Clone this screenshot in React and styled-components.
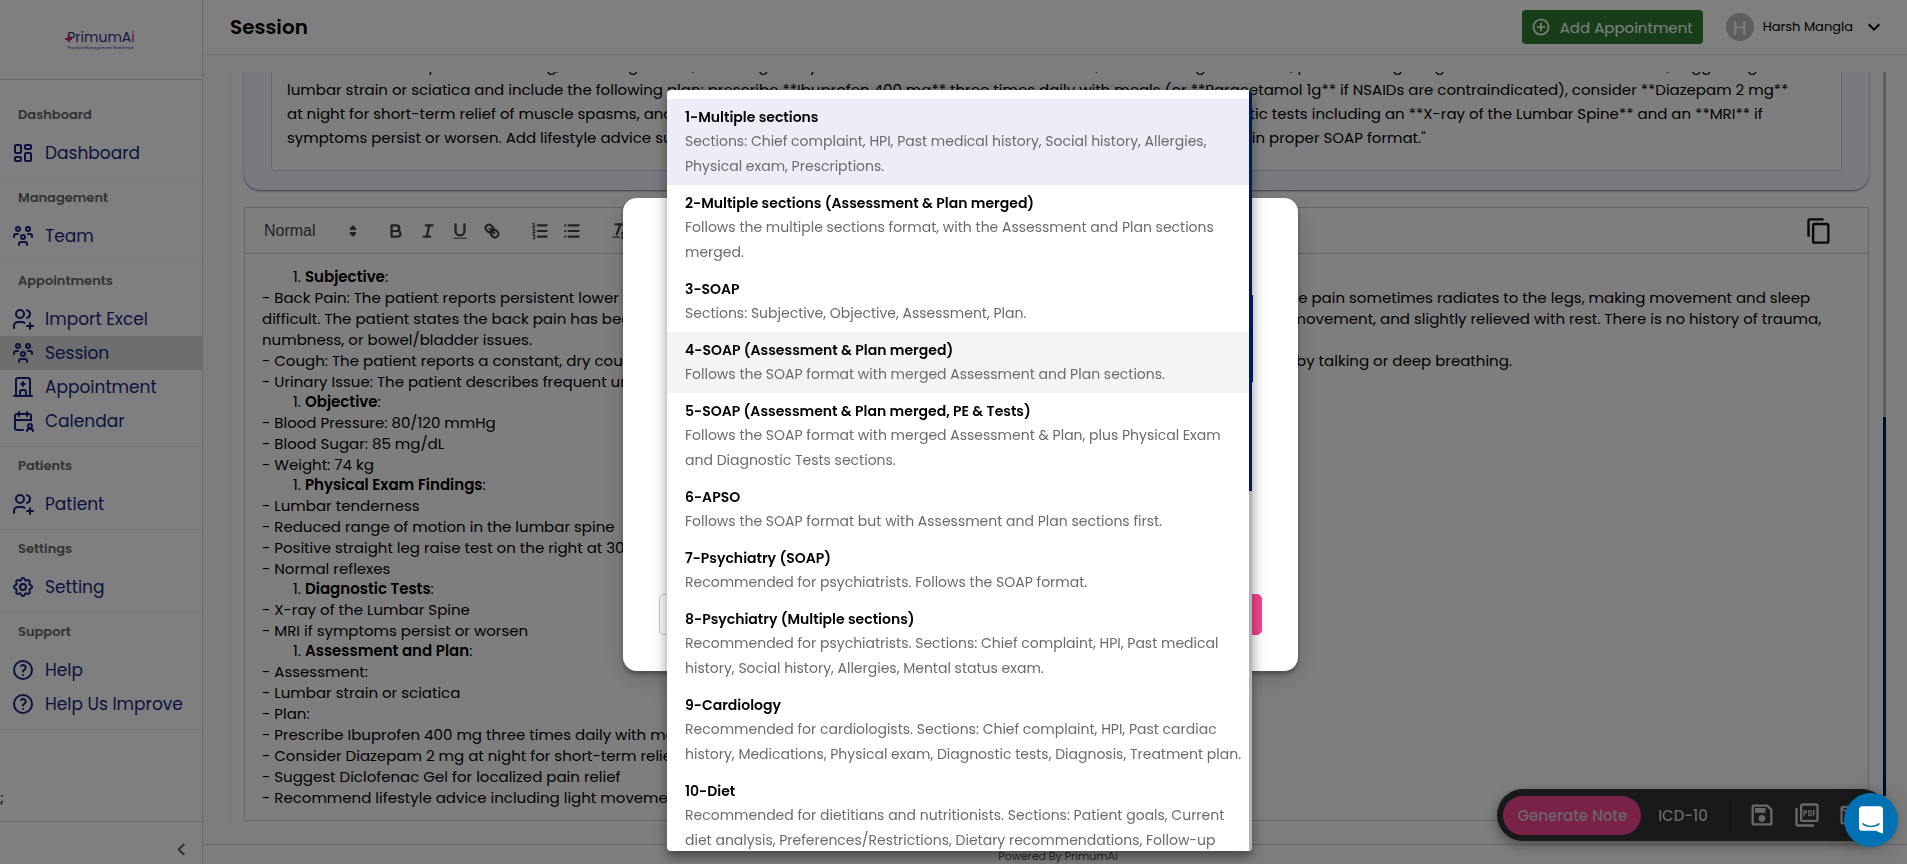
import React from "react";
import styled, { createGlobalStyle } from "styled-components";
import {
  TbLayoutDashboard,
  TbUsersGroup,
  TbUsersPlus,
  TbBuildingHospital,
  TbCalendarUser,
  TbSettings,
  TbHelp,
} from "react-icons/tb";
import {
  MdAddCircleOutline,
  MdKeyboardArrowDown,
  MdChevronLeft,
  MdContentCopy,
  MdOutlineSave,
  MdOutlinePictureAsPdf,
  MdOutlineEmail,
} from "react-icons/md";

const GlobalStyle = createGlobalStyle`
  *, *::before, *::after { box-sizing: border-box; }
  body {
    margin: 0;
    background: #fff;
    color: #000;
    font-family: Poppins, Inter, "Open Sans", sans-serif;
    font-size: 15px;
    overflow: hidden;
  }
  button { font: inherit; color: inherit; border: 0; background: none; padding: 0; cursor: pointer; }
  a { color: inherit; text-decoration: none; }
  b { font-weight: 600; }
  ul, p, h1, h2 { margin: 0; padding: 0; }
  svg { display: block; flex: none; }
`;

const Shell = styled.div`
  display: flex;
  height: 100vh;
  overflow: hidden;
`;

/* ---------- sidebar ---------- */

const Sidebar = styled.aside`
  display: flex;
  flex-direction: column;
  flex: none;
  width: 203px;
  border-right: 1px solid #d8d8d8;
`;

const LogoBox = styled.div`
  display: flex;
  justify-content: center;
  align-items: center;
  flex: none;
  height: 80px;
  border-bottom: 1px solid #d8d8d8;
`;

const Logo = styled.div`
  position: relative;
  color: #2d2f8e;
  font-size: 14px;
  line-height: 16px;
`;

const LogoCross = styled.svg`
  position: absolute;
  left: -2px;
  top: 6px;
`;

const LogoAccent = styled.span`
  color: #e6246f;
`;

const Tagline = styled.div`
  font-size: 4px;
  line-height: 5px;
  white-space: nowrap;
`;

const Nav = styled.nav`
  padding-top: 16px;
`;

const NavGroup = styled.section`
  padding-bottom: 8px;
  border-bottom: 1px solid #f2f2f2;
`;

const NavLabel = styled.h2`
  padding: 0 0 2px 18px;
  color: #666;
  font-size: 13px;
  font-weight: 600;
  line-height: 38px;
`;

const NavItem = styled.a`
  display: flex;
  align-items: center;
  gap: 10px;
  height: 34px;
  padding-left: 11px;
  color: #1a237e;
  font-size: 17px;
  background: ${(p) => (p.$active ? "#dcdcdc" : "transparent")};
`;

const Stray = styled.div`
  display: flex;
  align-items: flex-end;
  flex: 1;
  padding-bottom: 12px;
`;

const SidebarFoot = styled.div`
  display: flex;
  justify-content: flex-end;
  align-items: center;
  flex: none;
  height: 43px;
  padding: 12px 8px 0 0;
  border-top: 1px solid #d8d8d8;
  color: #616161;
`;

/* ---------- main column ---------- */

const Main = styled.main`
  display: flex;
  flex-direction: column;
  flex: 1;
  min-width: 0;
  background: #fafafa;
`;

const Header = styled.header`
  display: flex;
  align-items: center;
  flex: none;
  height: 55px;
  padding: 0 21px 0 27px;
  border-bottom: 1px solid #e0e0e0;
  background: #fff;
`;

const Title = styled.h1`
  flex: 1;
  font-size: 20px;
  font-weight: 600;
`;

const AddButton = styled.button`
  display: flex;
  align-items: center;
  gap: 9px;
  height: 34px;
  padding: 0 10px 0 9px;
  border-radius: 4px;
  background: #2e7d32;
  color: #fff;
`;

const UserButton = styled.button`
  display: flex;
  align-items: center;
  gap: 9px;
  margin-left: 23px;
  font-size: 13px;
`;

const Avatar = styled.span`
  display: grid;
  place-items: center;
  width: 28px;
  height: 28px;
  border-radius: 50%;
  background: #bdbdbd;
  color: #fafafa;
  font-size: 20px;
`;

const ScrollArea = styled.div`
  display: flex;
  flex: 1;
  min-height: 0;
  margin: 17px 21px 18px 28px;
`;

const Paper = styled.div`
  display: flex;
  flex-direction: column;
  justify-content: flex-end;
  flex: 1;
  min-width: 0;
  overflow: hidden;
  padding: 0 14px 4px 12px;
  border: 1px solid #f4f4f4;
  border-width: 0 0 1px 1px;
  background: #fcfcfc;
`;

const PageTrack = styled.div`
  flex: none;
  width: 3px;
  margin-bottom: 30px;
  padding-top: 345px;
  background: #c1c1c1;
`;

const Thumb = styled.div`
  height: ${(p) => p.$size || "100%"};
  background: #001a5c;
`;

const PromptPanel = styled.section`
  flex: none;
  margin-bottom: 17px;
  padding: 20px 27px 19px;
  border-radius: 0 0 16px 16px;
  background: #f0f4ff;
  box-shadow: 0 1px 2px rgba(0, 0, 0, 0.5);
`;

const PromptText = styled.div`
  padding: 12px 15px 20px;
  border: 1px solid #ccd2dd;
  border-radius: 4px;
  background: #fcfcfc;
  line-height: 24px;
  white-space: nowrap;
`;

const Editor = styled.section`
  flex: none;
  border: 1px solid #ccc;
`;

const Toolbar = styled.div`
  display: flex;
  align-items: center;
  height: 46px;
  padding: 0 35px 0 19px;
  border-bottom: 1px solid #ccc;
  color: #444;
`;

const FormatPicker = styled.label`
  display: flex;
  align-items: center;
  margin-right: 17px;
  font-family: "Liberation Sans", sans-serif;
  font-size: 16px;
`;

const FormatSelect = styled.select`
  width: 79px;
  border: 0;
  padding: 0;
  background: none;
  appearance: none;
  color: #444;
  font: inherit;
`;

const ToolButton = styled.button`
  display: grid;
  place-items: center;
  width: 32px;
  height: 32px;
  margin-left: ${(p) => (p.$spaced ? "16px" : "0")};
`;

const CopyButton = styled.button`
  margin-left: auto;
  color: #111;
`;

const QlIcon = styled.svg.attrs({ viewBox: "0 0 18 18", width: 20, height: 20 })`
  fill: none;
  stroke: currentColor;
  stroke-width: 2;
  stroke-linecap: round;
  stroke-linejoin: round;
`;

const Notes = styled.div`
  padding: 13px 17px 12px;
  line-height: 21px;
  white-space: nowrap;
`;

const NoteHeading = styled.p`
  padding-left: 31px;
  line-height: 20px;
`;

const Footer = styled.footer`
  flex: none;
  height: 20px;
  border-top: 1px solid #d4d4d4;
  color: #555;
  font-size: 11px;
  line-height: 23px;
  text-align: center;
  padding-left: 6px;
`;

/* ---------- floating controls ---------- */

const ActionPill = styled.div`
  position: fixed;
  right: 19px;
  bottom: 23px;
  display: flex;
  align-items: center;
  gap: 17px;
  height: 52px;
  padding: 0 22px 0 6px;
  border-radius: 26px;
  background: #333;
  color: #d0d0d0;
  font-weight: 500;
  box-shadow: 0 4px 12px rgba(0, 0, 0, 0.4);
`;

const GenerateButton = styled.button`
  height: 39px;
  padding: 0 14px;
  border-radius: 20px;
  background: #f4448f;
`;

const PillDivider = styled.span`
  width: 1px;
  height: 40px;
  margin-left: 5px;
  background: #2b2b2b;
`;

const ChatBubble = styled.button`
  position: fixed;
  right: 9px;
  bottom: 17px;
  z-index: 3;
  display: grid;
  place-items: center;
  width: 54px;
  height: 54px;
  border-radius: 50%;
  background: #0071b2;
  box-shadow: 0 1px 6px rgba(0, 0, 0, 0.1), 0 2px 24px rgba(0, 0, 0, 0.16);
`;

/* ---------- dialog and template menu ---------- */

const Scrim = styled.div`
  position: fixed;
  inset: 0;
  z-index: 2;
  display: grid;
  place-items: center;
  padding: 5px 0 0 14px;
  background: rgba(0, 0, 0, 0.5);
`;

const Dialog = styled.div`
  position: relative;
  display: flex;
  width: 675px;
  height: 473px;
  padding: 36px;
  border-radius: 14px;
  background: #fff;
  box-shadow: 0 3px 5px rgba(0, 0, 0, 0.35), 0 8px 24px rgba(0, 0, 0, 0.15);
`;

const DialogActions = styled.div`
  display: grid;
  grid-template-columns: 1fr 1fr;
  gap: 16px;
  align-self: flex-end;
  flex: 1;
`;

const DialogButton = styled.button`
  height: 41px;
  border: 1px solid ${(p) => (p.$primary ? "#f4448f" : "#ccc")};
  border-radius: 5px;
  background: ${(p) => (p.$primary ? "#f4448f" : "#fff")};
`;

const DialogThumb = styled.div`
  position: absolute;
  right: 45px;
  top: 97px;
  width: 3px;
  height: 87px;
  background: #0a1a80;
`;

const Menu = styled.div`
  position: absolute;
  left: 44px;
  top: -108px;
  display: flex;
  width: 585px;
  height: 761px;
  border-radius: 4px;
  overflow: hidden;
  background: #fff;
  box-shadow: 0 5px 5px -3px rgba(0, 0, 0, 0.2), 0 8px 10px 1px rgba(0, 0, 0, 0.14),
    0 3px 14px 2px rgba(0, 0, 0, 0.22);
`;

const MenuList = styled.ul`
  flex: 1;
  padding-top: 9px;
  overflow: hidden;
  list-style: none;
`;

const MenuItem = styled.li`
  padding: 6px 6px 6px 18px;
  background: ${(p) => (p.$selected ? "#ededf8" : p.$hovered ? "#f4f4f4" : "transparent")};
`;

const MenuTitle = styled.div`
  font-size: 14px;
  font-weight: 600;
  line-height: 24px;
`;

const MenuText = styled.div`
  color: #6b6b6b;
  font-size: 14px;
  line-height: 25px;
`;

const MenuTrack = styled.div`
  flex: none;
  width: 3px;
  background: #b4b4b4;
`;

const navGroups = [
  { label: "Dashboard", items: [["Dashboard", TbLayoutDashboard]] },
  { label: "Management", items: [["Team", TbUsersGroup]] },
  {
    label: "Appointments",
    items: [
      ["Import Excel", TbUsersPlus],
      ["Session", TbUsersGroup],
      ["Appointment", TbBuildingHospital],
      ["Calendar", TbCalendarUser],
    ],
  },
  { label: "Patients", items: [["Patient", TbUsersPlus]] },
  { label: "Settings", items: [["Setting", TbSettings]] },
  { label: "Support", items: [["Help", TbHelp], ["Help Us Improve", TbHelp]] },
];

const promptLines = [
  "Also include blood pressure reading, blood sugar level, and weight. Physical exam shows lumbar tenderness, reduced range of motion, positive straight leg raise and the normal reflexes, suggesting",
  "lumbar strain or sciatica and include the following plan: prescribe **Ibuprofen 400 mg** three times daily with meals (or **Paracetamol 1g** if NSAIDs are contraindicated), consider **Diazepam 2 mg**",
  "at night for short-term relief of muscle spasms, and suggest **Diclofenac Gel** for the localized pain relief. Recommend diagnostic tests including an **X-ray of the Lumbar Spine** and an **MRI** if",
  'symptoms persist or worsen. Add lifestyle advice such as light movement and avoiding prolonged sitting. Then write the full note in proper SOAP format."',
];

const notes = [
  { heading: "Subjective" },
  "- Back Pain: The patient reports persistent lower back pain for the past several weeks, described as a dull ache that gets worse at times. The pain sometimes radiates to the legs, making movement and sleep",
  "difficult. The patient states the back pain has been present almost every day, is made worse by sitting for a long time and by any sudden movement, and slightly relieved with rest. There is no history of trauma,",
  "numbness, or bowel/bladder issues.",
  "- Cough: The patient reports a constant, dry cough that has lasted for past several days, mostly without sputum, and is often made worse by talking or deep breathing.",
  "- Urinary Issue: The patient describes frequent urgency to urinate.",
  { heading: "Objective" },
  "- Blood Pressure: 80/120 mmHg",
  "- Blood Sugar: 85 mg/dL",
  "- Weight: 74 kg",
  { heading: "Physical Exam Findings" },
  "- Lumbar tenderness",
  "- Reduced range of motion in the lumbar spine",
  "- Positive straight leg raise test on the right at 30 degrees",
  "- Normal reflexes",
  { heading: "Diagnostic Tests" },
  "- X-ray of the Lumbar Spine",
  "- MRI if symptoms persist or worsen",
  { heading: "Assessment and Plan" },
  "- Assessment:",
  "- Lumbar strain or sciatica",
  "- Plan:",
  "- Prescribe Ibuprofen 400 mg three times daily with meals",
  "- Consider Diazepam 2 mg at night for short-term relief",
  "- Suggest Diclofenac Gel for localized pain relief",
  "- Recommend lifestyle advice including light movement",
];

const templates = [
  ["1-Multiple sections", "Sections: Chief complaint, HPI, Past medical history, Social history, Allergies, Physical exam, Prescriptions."],
  ["2-Multiple sections (Assessment & Plan merged)", "Follows the multiple sections format, with the Assessment and Plan sections merged."],
  ["3-SOAP", "Sections: Subjective, Objective, Assessment, Plan."],
  ["4-SOAP (Assessment & Plan merged)", "Follows the SOAP format with merged Assessment and Plan sections."],
  ["5-SOAP (Assessment & Plan merged, PE & Tests)", "Follows the SOAP format with merged Assessment & Plan, plus Physical Exam and Diagnostic Tests sections."],
  ["6-APSO", "Follows the SOAP format but with Assessment and Plan sections first."],
  ["7-Psychiatry (SOAP)", "Recommended for psychiatrists. Follows the SOAP format."],
  ["8-Psychiatry (Multiple sections)", "Recommended for psychiatrists. Sections: Chief complaint, HPI, Past medical history, Social history, Allergies, Mental status exam."],
  ["9-Cardiology", "Recommended for cardiologists. Sections: Chief complaint, HPI, Past cardiac history, Medications, Physical exam, Diagnostic tests, Diagnosis, Treatment plan."],
  ["10-Diet", "Recommended for dietitians and nutritionists. Sections: Patient goals, Current diet analysis, Preferences/Restrictions, Dietary recommendations, Follow-up plan."],
];

function EditorToolbar() {
  return (
    <Toolbar>
      <FormatPicker>
        <FormatSelect aria-label="Text style" defaultValue="Normal">
          <option>Normal</option>
          <option>Heading 1</option>
        </FormatSelect>
        <QlIcon>
          <path d="M7 11l2 2 2-2zM7 7l2-2 2 2z" fill="currentColor" />
        </QlIcon>
      </FormatPicker>
      <ToolButton aria-label="Bold">
        <QlIcon>
          <path d="M5 4h4.500a2.500 2.500 0 0 1 0 5H5zM5 9h5.500a2.500 2.500 0 0 1 0 5H5z" />
        </QlIcon>
      </ToolButton>
      <ToolButton aria-label="Italic">
        <QlIcon>
          <path d="M7 4h6M5 14h6M8 14l2-10" />
        </QlIcon>
      </ToolButton>
      <ToolButton aria-label="Underline">
        <QlIcon>
          <path d="M5 3v6a4 4 0 0 0 8 0V3" />
          <path d="M3.500 15.500h11" strokeWidth="1" />
        </QlIcon>
      </ToolButton>
      <ToolButton aria-label="Link">
        <QlIcon>
          <path d="M7 7l4 4" />
          <path d="M8.900 4.577a3.476 3.476 0 0 1 .36 4.679A3.476 3.476 0 0 1 4.577 8.900C3.185 7.500 2.035 6.400 4.217 4.217S7.500 3.185 8.900 4.577Z" />
          <path d="M13.423 9.100a3.476 3.476 0 0 0-4.679-.36 3.476 3.476 0 0 0 .36 4.679c1.392 1.392 2.500 2.542 4.679.36S14.815 10.500 13.423 9.100Z" />
        </QlIcon>
      </ToolButton>
      <ToolButton aria-label="Ordered list" $spaced>
        <QlIcon>
          <path d="M7 4h8M7 9h8M7 14h8" />
          <path d="M2.500 2.500l1-.5v3M2.500 5.500h2M2.500 7.500h1.500l.3 1-1.800 2h2M2.500 12.500h1.700l-.7 1.200 1 1-.5 1.300h-1.500" strokeWidth="1" />
        </QlIcon>
      </ToolButton>
      <ToolButton aria-label="Bullet list">
        <QlIcon>
          <path d="M6 4h9M6 9h9M6 14h9M3 4h0M3 9h0M3 14h0" />
        </QlIcon>
      </ToolButton>
      <ToolButton aria-label="Clear formatting" $spaced>
        <QlIcon>
          <path d="M5 3h8M6 12l3.350-9M11 11l4 4M15 11l-4 4" />
          <path d="M2.500 14.500h6" strokeWidth="1" />
        </QlIcon>
      </ToolButton>
      <CopyButton aria-label="Copy note">
        <MdContentCopy size={28} />
      </CopyButton>
    </Toolbar>
  );
}

function SideNav() {
  return (
    <Sidebar>
      <LogoBox>
        <Logo>
          <LogoCross width="7" height="8" viewBox="0 0 7 8">
            <path d="M3.500 0v7M0 4h7" stroke="#e6246f" strokeWidth="2" />
          </LogoCross>
          PrimumA<LogoAccent>i</LogoAccent>
          <Tagline>Practice Management Redefined</Tagline>
        </Logo>
      </LogoBox>
      <Nav>
        {navGroups.map((group) => (
          <NavGroup key={group.label}>
            <NavLabel>{group.label}</NavLabel>
            {group.items.map(([name, Icon]) => (
              <NavItem key={name} href="#" $active={name === "Session"}>
                <Icon size={24} />
                {name}
              </NavItem>
            ))}
          </NavGroup>
        ))}
      </Nav>
      <Stray>;</Stray>
      <SidebarFoot>
        <button aria-label="Collapse sidebar">
          <MdChevronLeft size={25} />
        </button>
      </SidebarFoot>
    </Sidebar>
  );
}

function TemplateDialog() {
  return (
    <Scrim>
      <Dialog role="dialog" aria-label="Choose a note template">
        <DialogActions>
          <DialogButton aria-label="Cancel" />
          <DialogButton aria-label="Generate" $primary />
        </DialogActions>
        <DialogThumb />
        <Menu>
          <MenuList role="listbox" aria-label="Templates">
            {templates.map(([title, text], i) => (
              <MenuItem key={title} role="option" aria-selected={i === 0} $selected={i === 0} $hovered={i === 3}>
                <MenuTitle>{title}</MenuTitle>
                <MenuText>{text}</MenuText>
              </MenuItem>
            ))}
          </MenuList>
          <MenuTrack>
            <Thumb $size="401px" />
          </MenuTrack>
        </Menu>
      </Dialog>
    </Scrim>
  );
}

export default function App() {
  return (
    <>
      <GlobalStyle />
      <Shell>
        <SideNav />
        <Main>
          <Header>
            <Title>Session</Title>
            <AddButton>
              <MdAddCircleOutline size={20} />
              Add Appointment
            </AddButton>
            <UserButton>
              <Avatar>H</Avatar>
              Harsh Mangla
              <MdKeyboardArrowDown size={24} />
            </UserButton>
          </Header>
          <ScrollArea>
            <Paper>
              <PromptPanel>
                <PromptText>
                  {promptLines.map((line) => (
                    <p key={line}>{line}</p>
                  ))}
                </PromptText>
              </PromptPanel>
              <Editor>
                <EditorToolbar />
                <Notes>
                  {notes.map((line, i) =>
                    line.heading ? (
                      <NoteHeading key={i}>
                        1. <b>{line.heading}</b>:
                      </NoteHeading>
                    ) : (
                      <p key={i}>{line}</p>
                    )
                  )}
                </Notes>
              </Editor>
            </Paper>
            <PageTrack>
              <Thumb />
            </PageTrack>
          </ScrollArea>
          <Footer>Powered By PrimumAi</Footer>
        </Main>
      </Shell>
      <ActionPill>
        <GenerateButton>Generate Note</GenerateButton>
        <button>ICD-10</button>
        <PillDivider />
        <button aria-label="Save">
          <MdOutlineSave size={28} />
        </button>
        <button aria-label="Export PDF">
          <MdOutlinePictureAsPdf size={28} />
        </button>
        <button aria-label="Email">
          <MdOutlineEmail size={28} />
        </button>
      </ActionPill>
      <TemplateDialog />
      <ChatBubble aria-label="Open chat">
        <svg width="24" height="28" viewBox="0 0 28 32">
          <path
            fill="#fff"
            d="M28 32s-4.714-1.855-8.527-3.340H3.437C1.540 28.660 0 27.026 0 25.013V3.644C0 1.633 1.540 0 3.437 0h21.125c1.898 0 3.437 1.632 3.437 3.645v18.404H28V32zm-4.139-11.982a.88.88 0 00-1.292-.105c-.03.026-3.015 2.681-8.570 2.681-5.486 0-8.517-2.636-8.571-2.684a.88.88 0 00-1.290.107 1.010 1.010 0 00-.219.708.992.992 0 00.318.664c.142.128 3.537 3.150 9.762 3.150 6.226 0 9.621-3.022 9.763-3.150a.992.992 0 00.317-.664 1.010 1.010 0 00-.218-.707z"
          />
        </svg>
      </ChatBubble>
    </>
  );
}
